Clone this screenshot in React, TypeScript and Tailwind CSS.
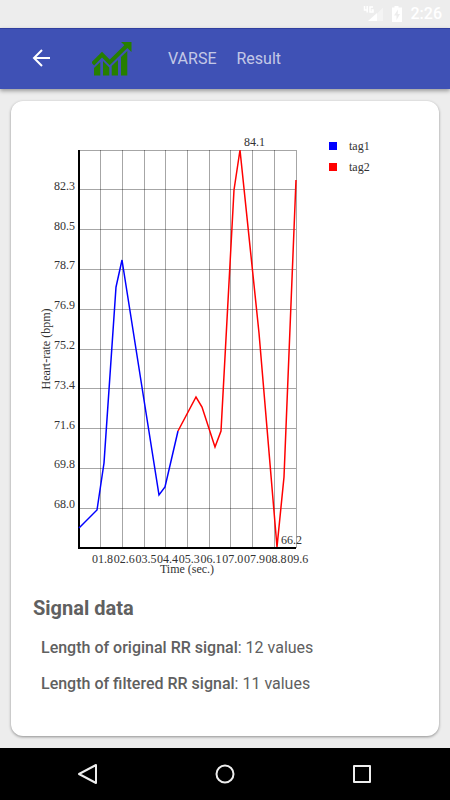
import React from 'react'

const LEFT = 79
const RIGHT = 296
const TOP = 150
const BOTTOM = 548

const rows = ["", "82.3", "80.5", "78.7", "76.9", "75.2", "73.4", "71.6", "69.8", "68.0"]
const columns = ["01.8", "02.6", "03.5", "04.4", "05.3", "06.1", "07.0", "07.9", "08.8", "09.6"]

const series = [
  {
    name: "tag1",
    stroke: "stroke-[#0000ff]",
    fill: "bg-[#0000ff]",
    points: "79,528 97,510 104,463 116,287 122,260 144,400 159,495 165,487 178,431",
  },
  {
    name: "tag2",
    stroke: "stroke-[#ff0000]",
    fill: "bg-[#ff0000]",
    points: "178,431 196,397 202,407 215,447 221,431 234,190 240,150 259,333 277,547 284,477 296,180",
  },
]

const signal = [
  { label: "Length of original RR signal", value: "12 values" },
  { label: "Length of filtered RR signal", value: "11 values" },
]

function StatusBar() {
  return (
    <div className="flex h-7 items-center justify-end gap-2 pr-2 text-white">
      <svg className="h-5 w-5" viewBox="0 0 20 20" fill="currentColor">
        <path d="M20 3.500V17H14V9.500z" opacity="0.4" />
        <path d="M14 9V17H5z" />
        <path d="M1.500 2v4h3.500M4.200 2v6.500M10 3H7v5h3V6H8.500" fill="none" stroke="currentColor" strokeWidth="1.500" />
      </svg>
      <svg className="h-4 w-3" viewBox="0 0 12 16" fill="currentColor">
        <path fillRule="evenodd" d="M3.500 0h4v1.500H11V16H1V1.500h2.500zM7 3.500L3 9.500h2.500V14L9 8H6.700z" />
      </svg>
      <span className="text-base leading-5 font-medium">2:26</span>
    </div>
  )
}

function Logo() {
  return (
    <svg className="h-9 w-10" viewBox="0 0 40 36" fill="#267f00">
      <path d="M0.700 23L10 13.500 17.700 21.500 34.500 5" fill="none" stroke="#267f00" strokeWidth="4" />
      <path d="M29 1H39.500V11z" />
      <path d="M2 27L8.300 21V34.500H2zM11 20L17.300 26.500V34.500H11zM19.700 25L26 19V34.500H19.700zM29 16L35.300 10V34.500H29z" />
    </svg>
  )
}

function Header() {
  return (
    <header className="relative flex h-[61px] items-center border-t border-[#303f9f] bg-[#3f51b5] pl-8 text-white shadow-[0_2px_4px_rgba(0,0,0,0.35)]">
      <button type="button" aria-label="Back" className="mr-10">
        <svg className="h-5 w-5" viewBox="0 0 20 20" fill="none" stroke="currentColor" strokeWidth="2">
          <path d="M18 9H2.500M10 1L2 9l8 8" />
        </svg>
      </button>
      <Logo />
      <nav className="ml-9 flex gap-5 text-base leading-5 text-white/70">
        <a href="#varse">VARSE</a>
        <a href="#result">Result</a>
      </nav>
    </header>
  )
}

function Chart() {
  const rowStep = (BOTTOM - TOP) / rows.length
  const colStep = (RIGHT - LEFT) / columns.length

  return (
    <svg
      className="h-[450px] w-[280px] flex-none font-['Liberation_Serif',serif] text-xs"
      viewBox="33 129 280 450"
      fill="#333"
    >
      <g stroke="#000" strokeOpacity="0.35" shapeRendering="crispEdges">
        {rows.map((_, i) => (
          <line key={i} x1={LEFT} x2={RIGHT} y1={TOP + i * rowStep} y2={TOP + i * rowStep} />
        ))}
        {columns.map((_, i) => (
          <line key={i} x1={LEFT + (i + 1) * colStep} x2={LEFT + (i + 1) * colStep} y1={TOP} y2={BOTTOM} />
        ))}
      </g>
      <path d={`M${LEFT} ${TOP}V${BOTTOM}H${RIGHT}`} fill="none" stroke="#000" strokeWidth="2" />
      {series.map((s) => (
        <polyline key={s.name} points={s.points} className={s.stroke} fill="none" strokeWidth="1.500" />
      ))}
      {rows.map((label, i) => (
        <text key={i} x="75" y={TOP + i * rowStep} textAnchor="end">{label}</text>
      ))}
      {columns.map((label, i) => (
        <text key={label} x={92 + i * colStep} y="563">{label}</text>
      ))}
      <text x="244" y="146">84.1</text>
      <text x="281" y="544">66.2</text>
      <text x="187" y="573" textAnchor="middle">Time (sec.)</text>
      <text transform="translate(50 349) rotate(-90)" textAnchor="middle">Heart-rate (bpm)</text>
    </svg>
  )
}

function Legend() {
  return (
    <ul className="flex flex-col gap-1 pt-2 font-['Liberation_Serif',serif] text-xs text-[#333]">
      {series.map((s) => (
        <li key={s.name} className="flex h-[17px] items-center gap-3">
          <span className={`h-2 w-2 ${s.fill}`} />
          {s.name}
        </li>
      ))}
    </ul>
  )
}

function NavBar() {
  return (
    <nav className="flex h-[52px] items-center justify-around bg-black px-5 text-[#eee]">
      <button type="button" aria-label="Back">
        <svg className="h-6 w-6" viewBox="0 0 24 24" fill="none" stroke="currentColor" strokeWidth="2" strokeLinejoin="round">
          <path d="M20 3v18L3 12z" />
        </svg>
      </button>
      <button type="button" aria-label="Home">
        <svg className="h-6 w-6" viewBox="0 0 24 24" fill="none" stroke="currentColor" strokeWidth="2">
          <circle cx="12" cy="12" r="8.500" />
        </svg>
      </button>
      <button type="button" aria-label="Recent apps">
        <svg className="h-6 w-6" viewBox="0 0 24 24" fill="none" stroke="currentColor" strokeWidth="2" strokeLinejoin="round">
          <path d="M4 4h16v16H4z" />
        </svg>
      </button>
    </nav>
  )
}

export default function App() {
  return (
    <div className="flex min-h-screen flex-col bg-[#ededed] font-[Roboto,sans-serif]">
      <StatusBar />
      <Header />
      <main className="flex flex-1 flex-col px-[11px] py-3">
        <section className="flex-1 rounded-xl bg-white px-[22px] pt-7 pb-8 text-[#606060] shadow-[0_1px_3px_rgba(0,0,0,0.4)]">
          <div className="flex gap-4">
            <Chart />
            <Legend />
          </div>
          <h2 className="mt-[17px] text-xl leading-6 font-bold">Signal data</h2>
          <ul className="mt-4 flex flex-col gap-3 pl-2">
            {signal.map((item) => (
              <li key={item.label} className="text-base leading-6">
                <b className="font-medium">{item.label}</b>: {item.value}
              </li>
            ))}
          </ul>
        </section>
      </main>
      <NavBar />
    </div>
  )
}
